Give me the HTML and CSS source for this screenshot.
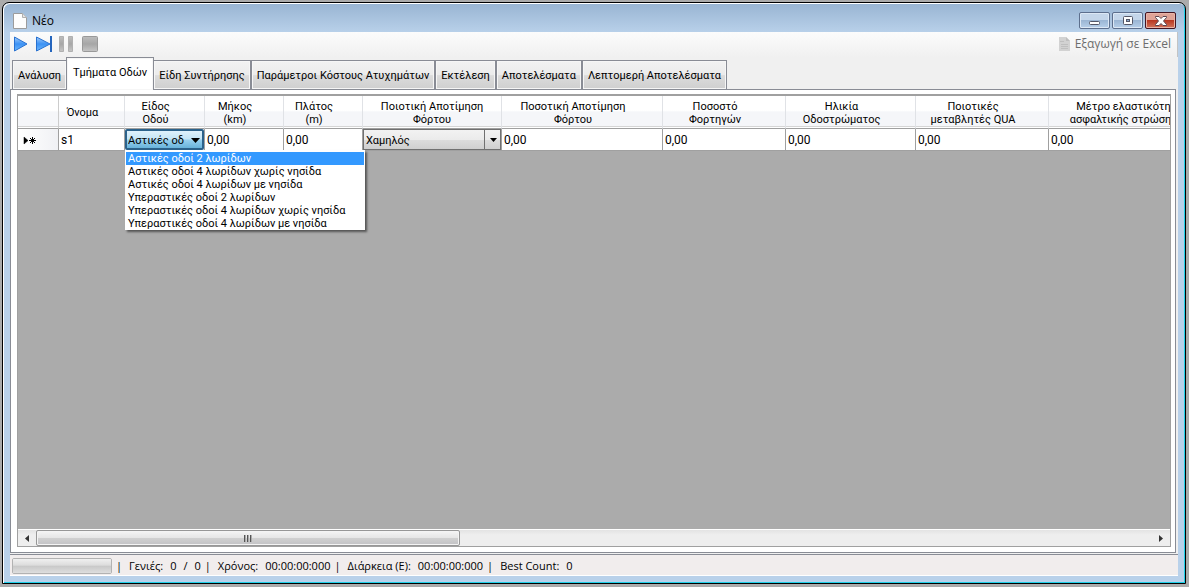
FILE: index.html
```html
<!DOCTYPE html>
<html lang="el">
<head>
<meta charset="utf-8">
<title>Νέο</title>
<link rel="stylesheet" href="styles.css">
</head>
<body>
<main class="window">
  <header class="titlebar">
    <svg class="doc-icon" width="14" height="16" viewBox="0 0 14 16"><path d="M.5.5h9l4 4v11H.5z" fill="#fdfdfd" stroke="#9c9c9c"/><path d="M9.5.5v4h4" fill="#e4e4e4" stroke="#b0b0b0"/></svg>
    <h1 class="title">Νέο</h1>
    <div class="caption-buttons">
      <button class="caption" aria-label="Ελαχιστοποίηση"><svg width="12" height="12" viewBox="0 0 12 12"><rect x=".5" y="6.500" width="10" height="3" rx="1" fill="#fff" stroke="#535666"/></svg></button>
      <button class="caption" aria-label="Μεγιστοποίηση"><svg width="12" height="12" viewBox="0 0 12 12"><rect x="1.500" y="1.500" width="9" height="8" rx="1" fill="#fff" stroke="#535666"/><rect x="4.500" y="4.500" width="3" height="2" fill="#8ba8cb" stroke="#535666"/></svg></button>
      <button class="caption caption-close" aria-label="Κλείσιμο"><svg width="12" height="12" viewBox="0 0 12 12"><path d="M.5 1.500h3.500L6 3.500l2-2h3.500v1L8.500 6l3 3.500v1H8l-2-2-2 2H.5v-1L3.500 6l-3-3.500z" fill="#fff" stroke="#5b4650"/></svg></button>
    </div>
  </header>
  <section class="client">
    <div class="toolbar">
      <button class="tool" aria-label="Εκτέλεση"><svg width="16" height="16" viewBox="0 0 16 16"><defs><linearGradient id="blue" x2="0" y2="1"><stop stop-color="#a4cdfa"/><stop offset=".5" stop-color="#3c92f4"/><stop offset="1" stop-color="#6eb8fc"/></linearGradient><linearGradient id="grey" x2="0" y2="1"><stop stop-color="#bdbdbd"/><stop offset=".5" stop-color="#a6a6a6"/><stop offset="1" stop-color="#c6c6c6"/></linearGradient></defs><path d="M1.500 1v14L14 8z" fill="url(#blue)" stroke="#2871d0"/></svg></button>
      <button class="tool" aria-label="Επόμενο βήμα"><svg width="16" height="16" viewBox="0 0 16 16"><path d="M.5 1v14L14 8z" fill="url(#blue)" stroke="#2871d0"/><path d="M15 0v16" stroke="#2465bd" stroke-width="2"/></svg></button>
      <button class="tool" aria-label="Παύση" disabled><svg width="16" height="16" viewBox="0 0 16 16"><path d="M.5.5h4v15h-4zm9 0h4v15h-4z" fill="url(#grey)" stroke="#b0b0b0"/></svg></button>
      <button class="tool" aria-label="Διακοπή" disabled><svg width="16" height="16" viewBox="0 0 16 16"><rect x=".5" y=".5" width="15" height="15" rx="1" fill="url(#grey)" stroke="#999"/></svg></button>
      <button class="export" disabled><svg width="12" height="14" viewBox="0 0 12 14"><path d="M1 0h7l4 4v10H1z" fill="#d2d2d2"/><path d="M8 0v4h4zM2 4h4v1H2zm1 3h7v1H3zm0 2h7v1H3zm0 2h7v1H3z" fill="#bfbfbf"/></svg>Εξαγωγή σε Excel</button>
    </div>
    <nav class="tabs" role="tablist">
      <button class="tab" role="tab">Ανάλυση</button>
      <button class="tab tab-active" role="tab" aria-selected="true">Τμήματα Οδών</button>
      <button class="tab" role="tab">Είδη Συντήρησης</button>
      <button class="tab" role="tab">Παράμετροι Κόστους Ατυχημάτων</button>
      <button class="tab" role="tab">Εκτέλεση</button>
      <button class="tab" role="tab">Αποτελέσματα</button>
      <button class="tab" role="tab">Λεπτομερή Αποτελέσματα</button>
    </nav>
    <div class="panel">
      <div class="grid">
        <div class="grid-view">
          <table class="table">
            <colgroup><col class="w-marker"><col class="w-name"><col class="w-kind"><col class="w-small"><col class="w-small"><col class="w-rating"><col class="w-load"><col class="w-trucks"><col class="w-age"><col class="w-qua"><col class="w-modulus"></colgroup>
            <thead>
              <tr><th class="corner"></th><th>Όνομα</th><th>Είδος<br>Οδού</th><th>Μήκος<br>(km)</th><th>Πλάτος<br>(m)</th><th class="centered">Ποιοτική Αποτίμηση<br>Φόρτου</th><th>Ποσοτική Αποτίμηση<br>Φόρτου</th><th>Ποσοστό<br>Φορτηγών</th><th>Ηλικία<br>Οδοστρώματος</th><th>Ποιοτικές<br>μεταβλητές QUA</th><th>Μέτρο ελαστικότη<br>ασφαλτικής στρώσης</th></tr>
            </thead>
            <tbody>
              <tr>
                <th class="marker" scope="row"><svg width="14" height="9" viewBox="0 0 14 9"><path d="M1 1v7l4-3.500z" stroke="#000" stroke-width=".5"/><path d="M9.500 1v7M6 4.500h7M7 2l5 5m0-5L7 7" stroke="#000"/></svg></th>
                <td>s1</td>
                <td class="cell-combo"><div class="combo combo-open">
                  <select class="combo-select" aria-label="Είδος Οδού"><option>Αστικές οδοί 2 λωρίδων</option></select>
                  <svg class="combo-arrow" width="9" height="5" viewBox="0 0 9 5"><path d="M0 0h9L4.500 5z"/></svg>
                  <ul class="options" role="listbox" aria-label="Είδος Οδού">
                    <li class="option option-active" role="option" aria-selected="true">Αστικές οδοί 2 λωρίδων</li>
                    <li class="option" role="option">Αστικές οδοί 4 λωρίδων χωρίς νησίδα</li>
                    <li class="option" role="option">Αστικές οδοί 4 λωρίδων με νησίδα</li>
                    <li class="option" role="option">Υπεραστικές οδοί 2 λωρίδων</li>
                    <li class="option" role="option">Υπεραστικές οδοί 4 λωρίδων χωρίς νησίδα</li>
                    <li class="option" role="option">Υπεραστικές οδοί 4 λωρίδων με νησίδα</li>
                  </ul>
                </div></td>
                <td>0,00</td><td>0,00</td>
                <td class="cell-combo"><div class="combo combo-plain">
                  <select class="combo-select" aria-label="Ποιοτική Αποτίμηση Φόρτου"><option>Χαμηλός</option></select>
                  <svg class="combo-arrow" width="7" height="4" viewBox="0 0 7 4"><path d="M0 0h7L3.500 4z"/></svg>
                </div></td>
                <td>0,00</td><td>0,00</td><td>0,00</td><td>0,00</td><td>0,00</td>
              </tr>
            </tbody>
          </table>
        </div>
        <div class="scrollbar">
          <button class="scroll-arrow" aria-label="Κύλιση αριστερά"><svg width="4" height="7" viewBox="0 0 4 7"><path d="M4 0v7L0 3.500z" fill="#333"/></svg></button>
          <div class="scroll-track"><div class="scroll-thumb"><svg width="9" height="7" viewBox="0 0 9 7"><path d="M.5 0v7m3-7v7m3-7v7" stroke="#555"/><path d="M1.500 0v7m3-7v7m3-7v7" stroke="#aaa"/></svg></div></div>
          <button class="scroll-arrow" aria-label="Κύλιση δεξιά"><svg width="4" height="7" viewBox="0 0 4 7"><path d="M0 0v7l4-3.500z" fill="#333"/></svg></button>
        </div>
      </div>
    </div>
    <footer class="status">
      <progress class="progress" value="0" max="100" aria-label="Πρόοδος"></progress>
      <span class="sep">|</span><span>Γενιές:</span><span>0</span><span>/</span><span>0</span>
      <span class="sep">|</span><span>Χρόνος:</span><span>00:00:00:000</span>
      <span class="sep">|</span><span>Διάρκεια (Ε):</span><span>00:00:00:000</span>
      <span class="sep">|</span><span>Best Count:</span><span>0</span>
    </footer>
  </section>
</main>
</body>
</html>
```
FILE: styles.css
```css
* { box-sizing: border-box; }
body {
  margin: 0;
  height: 100vh;
  padding: 2px 3px 3px 2px;
  display: flex;
  background: #ababab;
  color: #000;
  font: 11px/13px Roboto, "Liberation Sans", sans-serif;
}
button { font: inherit; color: inherit; margin: 0; }
svg { display: block; flex: none; }

.window {
  flex: 1;
  min-width: 0;
  display: flex;
  flex-direction: column;
  padding: 0 7px 7px;
  border: 1px solid #000;
  border-radius: 7px 7px 0 0;
  background: linear-gradient(#98b4d2, #b9d1ea 30px);
  box-shadow: inset 1px 1px #fff, inset -1px -1px #1fd1ea;
}
.titlebar {
  height: 29px;
  flex: none;
  display: flex;
  align-items: center;
  padding: 6px 0 0 3px;
}
.title {
  margin: 0 auto 0 5px;
  font: 12px/16px "Open Sans", "Noto Sans", sans-serif;
}
.caption-buttons { display: flex; gap: 2px; margin-right: 2px; }
.caption {
  width: 31px;
  height: 17px;
  padding: 0;
  display: grid;
  place-items: center;
  border: 1px solid #5d6f8d;
  border-radius: 2px;
  background: linear-gradient(#c4d6ea 45%, #9bb6d4 50%, #b7d0ea);
  box-shadow: inset 0 0 0 1px #dce8f5;
}
.caption-close {
  border-color: #431422;
  background: linear-gradient(#dfa397 45%, #b83822 50%, #d2745c);
  box-shadow: inset 0 0 0 1px #e8b4a8;
}

.client {
  flex: 1;
  min-height: 0;
  display: flex;
  flex-direction: column;
  background: #f0f0f0;
}
.toolbar {
  height: 25px;
  flex: none;
  display: flex;
  align-items: center;
  gap: 7px;
  padding: 0 6px 1px 3px;
  border-right: 1px solid #c4c4c4;
  background: linear-gradient(#fcfcfc, #f0f0f0);
}
.tool, .export { padding: 0; border: 0; background: none; }
.export {
  margin-left: auto;
  display: flex;
  align-items: center;
  gap: 5px;
  color: #6d6d6d;
  font: 12px/16px "Open Sans", "Noto Sans", sans-serif;
}
.tabs {
  height: 32px;
  flex: none;
  display: flex;
  align-items: flex-end;
  padding-left: 2px;
}
.tab {
  height: 29px;
  padding: 0 5px;
  border: 1px solid #898c95;
  border-width: 1px 1px 0 1px;
  background: linear-gradient(#f2f2f2, #ebebeb 50%, #dcdcdc 52%, #cfcfcf);
  box-shadow: inset 0 0 0 1px #f6f6f6;
  white-space: nowrap;
}
.tab-active {
  height: 33px;
  margin: 0 -1px -1px;
  padding: 0 6px 3px;
  z-index: 1;
  background: #fff;
}
.panel {
  flex: 1;
  min-height: 0;
  margin-right: 2px;
  display: flex;
  padding: 4px 4px 5px 6px;
  border: 1px solid #898c95;
  background: #fff;
}
.grid {
  flex: 1;
  min-width: 0;
  display: flex;
  flex-direction: column;
  border: 1px solid #a0a0a0;
  border-top-width: 2px;
  background: #ababab;
}
.grid-view { flex: 1; min-height: 0; overflow: hidden; }
.table {
  width: 1199px;
  table-layout: fixed;
  border-collapse: separate;
  border-spacing: 0;
}
.w-marker { width: 41px; }
.w-name { width: 66px; }
.w-kind { width: 80px; }
.w-small { width: 79px; }
.w-rating { width: 139px; }
.w-load { width: 161px; }
.w-trucks { width: 123px; }
.w-age { width: 130px; }
.w-qua { width: 133px; }
.w-modulus { width: 168px; }
.table th {
  height: 33px;
  padding: 1px 18px 0 0;
  border-right: 1px solid #e0e2e6;
  border-bottom: 1px solid #a0a0a0;
  background: linear-gradient(#fff 45%, #f5f6f9 50%, #f5f6f9);
  box-shadow: inset 0 -1px #fff, inset 0 -2px #d5d5d5;
  font-weight: normal;
  text-align: center;
  white-space: nowrap;
}
.table .centered { padding-right: 0; }
.table .corner { border-right-color: #ccc; }
.table td, .table .marker {
  height: 22px;
  padding: 1px 2px 0;
  border-right: 1px solid #a0a0a0;
  border-bottom: 1px solid #a0a0a0;
  background: #fff;
  font-size: 12px;
}
.table .marker { padding-left: 5px; background: linear-gradient(90deg, #fff, #f0f1f4); box-shadow: none; }
.table .cell-combo { padding: 0; font-size: 11px; }
.combo { position: relative; height: 21px; display: flex; }
.combo-select {
  appearance: none;
  flex: 1;
  min-width: 0;
  margin: 0;
  padding: 1px 18px 0 2px;
  border: 1px solid #707070;
  border-radius: 0;
  background: linear-gradient(#f2f2f2, #ebebeb 50%, #dcdcdc 52%, #cfcfcf);
  color: #000;
  font: inherit;
}
.combo-open .combo-select {
  padding: 1px 18px 0 1px;
  border: 2px solid #2c628b;
  border-radius: 2px;
  background: linear-gradient(#dff1fb, #c4e5f6 48%, #98d1ef 52%, #68b3db);
}
.combo-arrow { position: absolute; right: 4px; top: 9px; pointer-events: none; }
.combo-plain::after {
  content: "";
  position: absolute;
  inset: 1px 16px 1px auto;
  border-left: 1px solid #707070;
}
.options {
  position: absolute;
  top: 100%;
  left: 0;
  z-index: 2;
  width: 240px;
  margin: 0;
  padding: 2px 1px 0;
  list-style: none;
  background: #fff;
  box-shadow: 2px 2px 2px #555;
}
.option { padding: 0 2px; text-align: left; white-space: nowrap; }
.option-active { background: #3399ff; color: #fff; }

.scrollbar {
  height: 17px;
  flex: none;
  display: flex;
  background: linear-gradient(#e3e3e3, #eee 30%);
  border-top: 1px solid #fff;
}
.scroll-arrow {
  width: 18px;
  padding: 0;
  display: grid;
  place-items: center;
  border: 0;
  background: none;
}
.scroll-track { flex: 1; display: flex; }
.scroll-thumb {
  width: 38%;
  display: grid;
  place-items: center;
  border: 1px solid #979797;
  border-radius: 2px;
  background: linear-gradient(#f5f5f5, #e6e6e6 48%, #d0d0d0 52%, #c2c2c5);
  box-shadow: inset 0 0 0 1px #f4f4f4;
}
.status {
  height: 22px;
  flex: none;
  margin-top: 1px;
  display: flex;
  align-items: center;
  gap: 7px;
  padding: 1px 2px 0;
  border-top: 1px solid #898c95;
  border-bottom: 1px solid #fff;
  background: #f1eded;
  font: 11px/16px "Open Sans", "Noto Sans", sans-serif;
  white-space: nowrap;
}
.sep { margin-left: -3px; }
.progress {
  appearance: none;
  width: 100px;
  height: 16px;
  border: 1px solid #b2b2b2;
  border-radius: 2px;
  overflow: hidden;
}
.progress::-webkit-progress-bar {
  background: linear-gradient(#f0f0f0, #dcdcdc 45%, #c8c8c8 50%, #dedede);
}
```
